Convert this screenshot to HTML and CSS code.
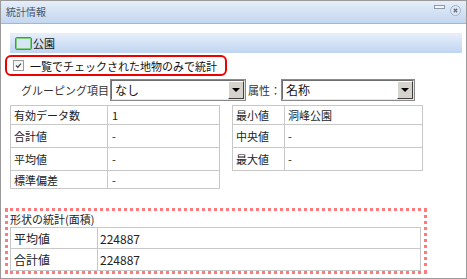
FILE: index.html
```html
<!DOCTYPE html>
<html lang="ja">
<head>
<meta charset="utf-8">
<link rel="stylesheet" href="styles.css">
</head>
<body>
<div class="window">
  <div class="titlebar">
    <span class="title">統計情報</span>
    <span class="tools">
      <span class="min"></span>
      <span class="close">
        <svg width="11" height="11" viewBox="0 0 11 11"><circle cx="5.5" cy="5.5" r="5" fill="#dfe8f5" stroke="#9fb3cf"/><path d="M3.8 3.8 L7.2 7.2 M7.2 3.8 L3.8 7.2" stroke="#6a6f78" stroke-width="1.3"/></svg>
      </span>
    </span>
  </div>
  <div class="content">
    <div class="band">
      <span class="swatch"></span><span class="band-label">公園</span>
    </div>
    <div class="checkrow">
      <span class="checkbox">
        <svg width="9" height="9" viewBox="0 0 9 9"><path d="M2 4.5 L3.8 6.3 L7 2.6" fill="none" stroke="#4a4a4a" stroke-width="1.3"/></svg>
      </span>
      <span class="check-label">一覧でチェックされた地物のみで統計</span>
    </div>
    <div class="grouprow">
      <span class="glabel">グルーピング項目</span>
      <span class="select sel1"><span class="sel-text">なし</span><span class="sel-btn"><i class="tri"></i></span></span>
      <span class="alabel">属性：</span>
      <span class="select sel2"><span class="sel-text">名称</span><span class="sel-btn"><i class="tri"></i></span></span>
    </div>
    <div class="tables">
      <table class="stat left">
        <tr class="r1"><td class="k">有効データ数</td><td>1</td></tr>
        <tr class="r2"><td class="k">合計値</td><td>-</td></tr>
        <tr class="r3"><td class="k">平均値</td><td>-</td></tr>
        <tr class="r4"><td class="k">標準偏差</td><td>-</td></tr>
      </table>
      <table class="stat right">
        <tr class="r1"><td class="k">最小値</td><td>洞峰公園</td></tr>
        <tr class="r2"><td class="k">中央値</td><td>-</td></tr>
        <tr class="r3"><td class="k">最大値</td><td>-</td></tr>
      </table>
    </div>
    <div class="shape">
      <div class="shape-title">形状の統計(面積)</div>
      <table class="stat area">
        <tr class="a1"><td class="k">平均値</td><td>224887</td></tr>
        <tr class="a2"><td class="k">合計値</td><td>224887</td></tr>
      </table>
    </div>
  </div>
</div>
</body>
</html>
```

FILE: styles.css
```css
html, body {
  margin: 0;
  padding: 0;
  background: #ffffff;
}
body {
  font-family: "Noto Sans CJK JP", "Noto Sans", sans-serif;
  color: #222222;
}
.window {
  width: 467px;
  height: 279px;
  box-sizing: border-box;
  border: 1px solid #9a9a9a;
  background: #ffffff;
  overflow: hidden;
}
.titlebar {
  height: 22px;
  border-bottom: 1px solid #9fb6d6;
  background: linear-gradient(#e6eef9, #d4e2f4 50%, #c3d7ef);
  display: flex;
  align-items: center;
  justify-content: space-between;
  padding: 0 5px 0 5px;
}
.title {
  font-size: 10px;
  color: #4a5568;
  line-height: 22px;
}
.tools {
  display: flex;
  align-items: flex-start;
  gap: 5px;
  height: 22px;
  padding-top: 3px;
  box-sizing: border-box;
}
.min {
  width: 9px;
  height: 2px;
  border: 1px solid #8d98a8;
  background: #f2f5f9;
  margin-top: 1px;
}
.close {
  display: block;
  width: 11px;
  height: 11px;
  margin-top: 1px;
}
.close svg { display: block; }
.content {
  padding: 9px 4px 0 4px;
}
.band {
  margin-left: 5px;
  height: 20px;
  background: linear-gradient(#e8effb, #d3e2f5 50%, #bfd6f0);
  display: flex;
  align-items: center;
  padding-left: 5px;
}
.swatch {
  width: 15px;
  height: 11px;
  border: 1px solid #3aa23a;
  box-shadow: inset 0 0 0 1px #7fcf7f;
  background: #d7e6f3;
  border-radius: 2px;
}
.band-label {
  font-size: 11px;
  margin-left: 1px;
  color: #111;
}
.checkrow {
  margin-top: 2px;
  width: 222px;
  height: 21px;
  box-sizing: border-box;
  border: 2px solid #ee0000;
  border-radius: 6px;
  display: flex;
  align-items: center;
  padding-left: 6px;
}
.checkbox {
  width: 9px;
  height: 9px;
  border: 1px solid #9a9a9a;
  background: linear-gradient(#f0f0f0, #ffffff);
  display: flex;
}
.checkbox svg { display: block; }
.check-label {
  font-size: 11px;
  margin-left: 6px;
  color: #111;
  white-space: nowrap;
}
.grouprow {
  margin-top: 3px;
  height: 22px;
  display: flex;
  align-items: center;
}
.glabel {
  width: 104px;
  text-align: right;
  font-size: 11px;
  color: #333;
  padding-right: 1px;
  white-space: nowrap;
}
.alabel {
  font-size: 11px;
  color: #333;
  width: 35px;
  padding-left: 2px;
  box-sizing: border-box;
  white-space: nowrap;
  overflow: visible;
}
.select {
  height: 22px;
  box-sizing: border-box;
  border: 2px solid;
  border-color: #6e6e6e #e6e6e6 #e6e6e6 #6e6e6e;
  outline: 1px solid #8a8a8a;
  outline-offset: -1px;
  background: #fff;
  display: flex;
  align-items: stretch;
  flex-shrink: 0;
}
.sel1 { width: 136px; }
.sel2 { width: 134px; }
.sel-text {
  flex: 1;
  font-size: 12px;
  line-height: 18px;
  padding-left: 3px;
  color: #111;
}
.sel-btn {
  width: 16px;
  background: #d6d3cc;
  border-left: 1px solid #fff;
  border-top: 1px solid #fff;
  border-right: 1px solid #404040;
  border-bottom: 1px solid #404040;
  box-sizing: border-box;
  display: flex;
  align-items: center;
  justify-content: center;
}
.tri {
  width: 0;
  height: 0;
  border-left: 4px solid transparent;
  border-right: 4px solid transparent;
  border-top: 4px solid #000;
}
.tables {
  margin-top: 4px;
  display: flex;
  align-items: flex-start;
}
.stat {
  border-collapse: collapse;
  font-size: 11px;
  color: #222;
}
.stat td {
  border: 1px solid #c8c8c8;
  padding: 0 0 0 3px;
  white-space: nowrap;
}
.left {
  margin-left: 5px;
  width: 210px;
}
.left td.k { width: 93px; }
.left td { padding-left: 3px; }
.left td + td { padding-left: 4px; }
.right {
  margin-left: 12px;
  width: 191px;
}
.right td.k { width: 48px; }
.r1 td { height: 18px; }
.r2 td { height: 22px; }
.r3 td { height: 22px; }
.r4 td { height: 17px; }
.shape {
  margin-top: 19px;
  width: 422px;
  height: 66px;
  box-sizing: border-box;
  border: 3px dotted #ff7b7b;
  padding: 0 3px 0 2px;
}
.shape-title {
  font-size: 11px;
  height: 16px;
  line-height: 16px;
  color: #222;
}
.area {
  width: 100%;
  font-size: 12px;
}
.area td.k { width: 83px; }
.area td + td { padding-left: 2px; }
.a1 td { height: 20px; }
.a2 td { height: 21px; }
```
